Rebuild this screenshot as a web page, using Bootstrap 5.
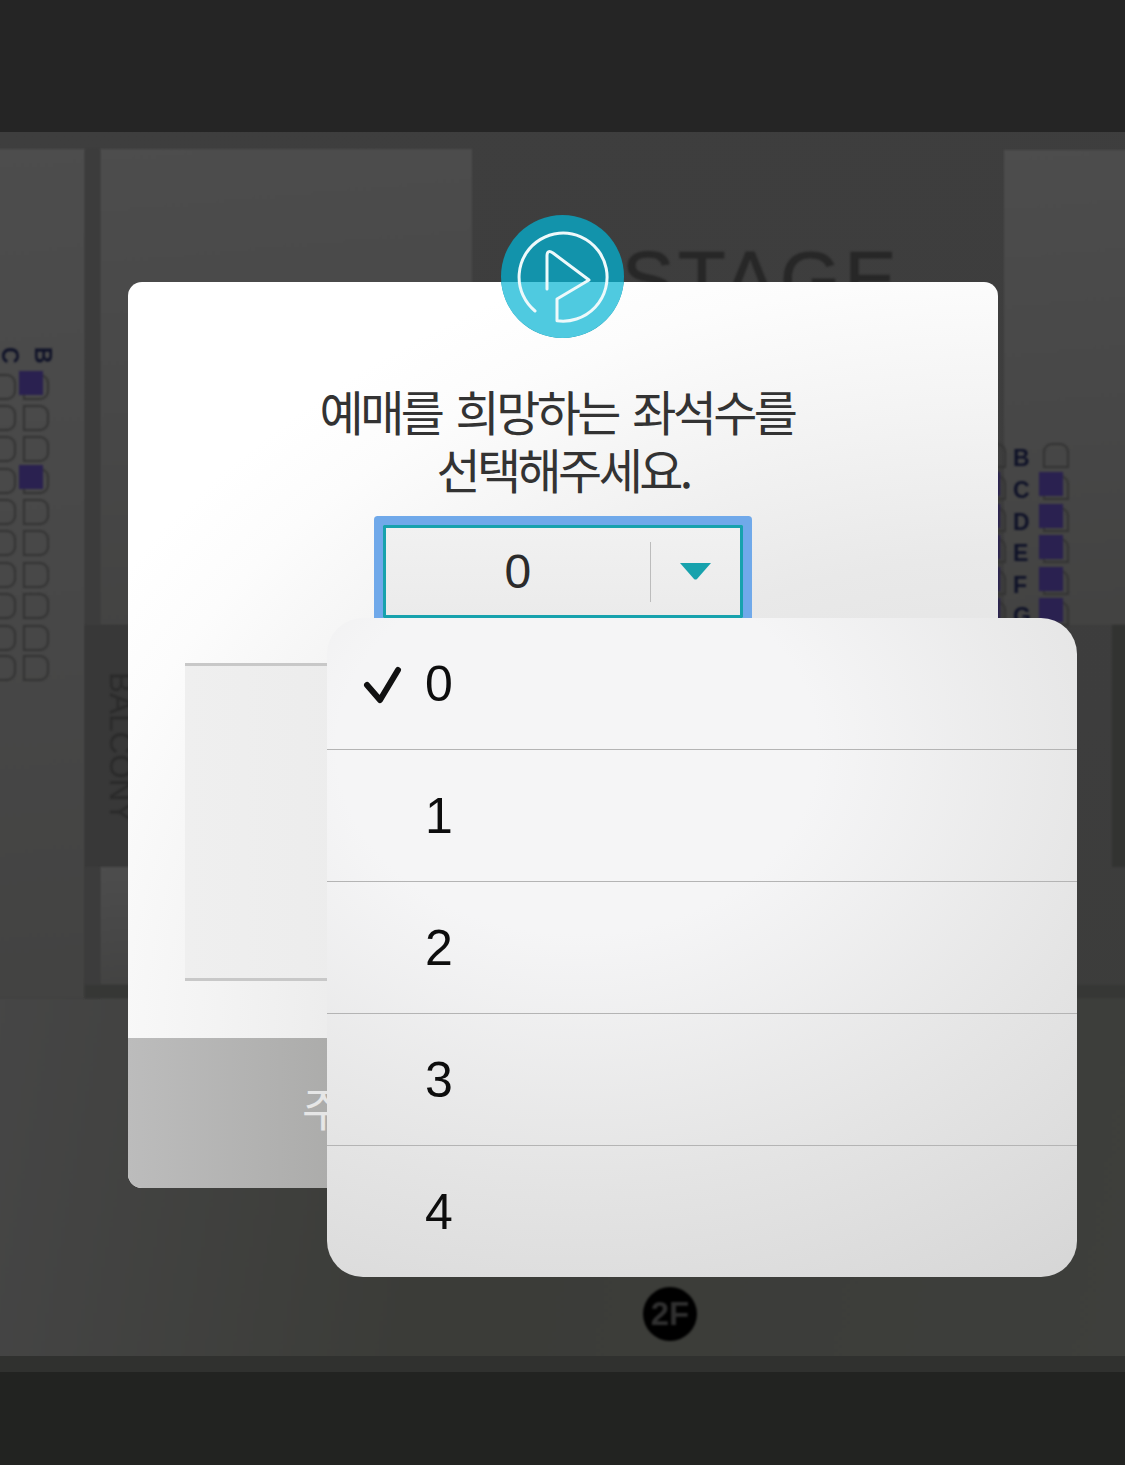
<!DOCTYPE html>
<html lang="ko">

<head>
    <meta charset="UTF-8">
    <meta name="viewport" content="width=device-width, initial-scale=1.0">
    <title>좌석 선택</title>
    <link rel="stylesheet" href="https://cdn.jsdelivr.net/npm/bootstrap@5.3.2/dist/css/bootstrap.min.css">
    <style>
        html, body {
            margin: 0;
            background-color: #252525;
        }

        .screen {
            position: relative;
            width: 1125px;
            height: 1465px;
            overflow: hidden;
            font-family: "Liberation Sans", "Noto Sans CJK KR", sans-serif;
        }

        .top-bar {
            height: 132px;
            background-color: #252525;
        }

        .bottom-bar {
            height: 93px;
            background-color: #222321;
        }

        .seat-map {
            position: relative;
            height: 1240px;
            overflow: hidden;
            background: linear-gradient(170deg, #3e3e3e 0%, #3d3d3d 55%, #3b3c39 100%);
            border-bottom: 16px solid #30312f;
        }

        .seat-map > * {
            filter: blur(.9px);
        }

        .map-floor {
            position: absolute;
            left: -4px;
            right: -4px;
            top: 866px;
            bottom: -4px;
            background: linear-gradient(100deg, #464646 0%, #3b3c38 40%, #3e3f3c 100%);
        }

        .map-panel {
            position: absolute;
            background: linear-gradient(175deg, #4d4d4d 0%, #474747 60%, #434342 100%);
        }

        .map-strip {
            position: absolute;
            background-color: #3c3c3c;
        }

        .stage-text {
            position: absolute;
            left: 622px;
            top: 108px;
            font-size: 78px;
            line-height: 1;
            letter-spacing: 4px;
            color: #272727;
            -webkit-text-stroke: .8px #272727;
        }

        .balcony-text {
            position: absolute;
            left: 104px;
            top: 540px;
            writing-mode: vertical-rl;
            font-size: 31.5px;
            line-height: 1;
            color: #2a2a2a;
        }

        .seat-box {
            position: absolute;
            border: 2px solid #333;
        }

        .seat-left {
            width: 26px;
            height: 26px;
            border-radius: 0 9px 9px 0;
        }

        .seat-right {
            width: 26px;
            height: 25px;
            border-radius: 9px 9px 0 0;
        }

        .seat-taken {
            position: absolute;
            width: 24px;
            height: 24px;
            left: -6px;
            top: -5px;
            background-color: #2a2150;
        }

        .row-label {
            position: absolute;
            font-size: 23px;
            font-weight: 700;
            line-height: 1;
            color: #0f1228;
        }

        .row-label-turned {
            writing-mode: vertical-rl;
        }

        .floor-badge {
            position: absolute;
            left: 643px;
            top: 1155px;
            width: 54px;
            height: 54px;
            border-radius: 50%;
            background-color: #000;
            color: #303030;
            font-size: 33px;
            font-weight: 700;
        }

        .seat-dialog {
            position: absolute;
            left: 128px;
            top: 282px;
            width: 870px;
            height: 906px;
            border-radius: 14px;
            background: radial-gradient(1000px 800px at 870px 756px, #e0e0e0 30%, #e9e9e9 60%, #f3f3f3 78%, #fcfcfc 95%, #fff 105%);
        }

        .brand-mark {
            position: absolute;
            left: 373px;
            top: -67px;
            width: 123px;
            height: 123px;
        }

        .dialog-title {
            margin: 99px 0 28px;
            font-family: "Noto Sans CJK KR", "Liberation Sans", sans-serif;
            font-size: 48px;
            font-weight: 400;
            line-height: 58px;
            letter-spacing: -3.6px;
            text-align: center;
            color: #333;
        }

        .title-first {
            display: inline-block;
            margin-right: 12px;
            word-spacing: 4.5px;
        }

        .count-select {
            width: 360px;
            height: 93px;
            margin: 0 auto 45px;
            border: 3px solid #17a2ad;
            box-shadow: 0 0 0 9px #70a9ea;
            border-radius: 1px;
            background: linear-gradient(#f1f1f1, #ebebeb);
            font-size: 48px;
            color: #2b2b2b;
        }

        .count-rule {
            width: 1.5px;
            height: 60px;
            background-color: #bcbcbc;
        }

        .count-arrow {
            width: 89px;
        }

        .seat-note {
            height: 318px;
            margin: 0 57px 57px;
            border-top: 3px solid #c8c8c8;
            border-bottom: 3px solid #c8c8c8;
            background: linear-gradient(90deg, #efefef, #e2e2e2);
        }

        .dialog-foot {
            height: 150px;
            padding: 0 0 14px 174px;
            border-radius: 0 0 14px 14px;
            background: linear-gradient(90deg, #bcbcbc, #a4a4a2 35%);
            font-family: "Noto Sans CJK KR", "Liberation Sans", sans-serif;
            font-size: 46px;
            color: #e6e6e6;
        }

        .count-menu {
            position: absolute;
            left: 327px;
            top: 618px;
            width: 750px;
            height: 659px;
            overflow: hidden;
            border-radius: 36px;
            background: radial-gradient(800px 620px at 250px 130px, #f5f5f6 30%, #e4e4e4 70%, #d6d6d6 105%);
        }

        .menu-row {
            position: relative;
            height: 132px;
            padding: 0 0 0 98px;
            background: none;
            border: 0;
            border-bottom: 1px solid #b4b4b4;
            border-radius: 0;
            font-size: 50px;
            line-height: 1;
            color: #0d0d0d;
        }

        .menu-row:last-child {
            height: 131px;
            border-bottom: 0;
        }

        .menu-check {
            position: absolute;
            left: 36px;
            top: 46px;
        }
    </style>
</head>

<body>
    <div class="screen">
        <div class="d-flex flex-column">
            <div class="top-bar"></div>
            <div class="seat-map" id="seatMap">
                <div class="map-floor"></div>
                <div class="map-panel" style="left:-4px;top:17px;width:89px;height:849px"></div>
                <div class="map-panel" style="left:100px;top:17px;width:372px;height:476px"></div>
                <div class="map-panel" style="left:1004px;top:18px;width:125px;height:475px"></div>
                <div class="map-strip" style="left:85px;top:17px;width:15px;height:849px"></div>
                <div class="map-strip" style="left:85px;top:493px;width:43px;height:242px;background-color:#383838"></div>
                <div class="map-panel" style="left:100px;top:735px;width:30px;height:118px"></div>
                <div class="map-strip" style="left:85px;top:735px;width:15px;height:131px"></div>
                <div class="map-strip" style="left:85px;top:853px;width:1044px;height:13px;background-color:#363735"></div>
                <div class="map-strip" style="left:1112px;top:493px;width:17px;height:242px;background-color:#323331"></div>
                <div class="stage-text">STAGE</div>
                <div class="balcony-text">BALCONY</div>
                <div class="floor-badge d-flex align-items-center justify-content-center">2F</div>
            </div>
            <div class="bottom-bar"></div>
        </div>

        <div class="seat-dialog d-flex flex-column">
            <svg class="brand-mark" viewBox="0 0 123 123" fill="none">
                <circle cx="61.5" cy="61.5" r="61.5" fill="#1293ab"/>
                <path d="M.25 67H122.750A61.500 61.500 0 0 1 .25 67Z" fill="#4fcae0"/>
                <path d="M34 96A44 44 0 1 1 56 105.700V84L88 65L52 38Q46 34 46 41V74" stroke="#eef9fb" stroke-width="3" stroke-linecap="round" stroke-linejoin="round"/>
            </svg>
            <h1 class="dialog-title"><span class="title-first">예매를 희망하는 좌석수를</span><br>선택해주세요.</h1>
            <div class="count-select d-flex align-items-center">
                <div class="flex-grow-1 text-center">0</div>
                <div class="count-rule"></div>
                <div class="count-arrow d-flex justify-content-center">
                    <svg width="31" height="17" viewBox="0 0 31 17"><path d="M0 0H31L17 16Q15.500 17 14 16Z" fill="#17a2ad"/></svg>
                </div>
            </div>
            <div class="seat-note"></div>
            <div class="dialog-foot d-flex align-items-center">주</div>
        </div>

        <div class="count-menu list-group">
            <div class="menu-row list-group-item d-flex align-items-center">
                <svg class="menu-check" width="40" height="40" viewBox="0 0 40 40" fill="none"><path d="M4 21L17 36L35 6" stroke="#111" stroke-width="6" stroke-linecap="round" stroke-linejoin="round"/></svg>
                0
            </div>
            <div class="menu-row list-group-item d-flex align-items-center">1</div>
            <div class="menu-row list-group-item d-flex align-items-center">2</div>
            <div class="menu-row list-group-item d-flex align-items-center">3</div>
            <div class="menu-row list-group-item d-flex align-items-center">4</div>
        </div>
    </div>
    <script>
        const seatMap = document.getElementById('seatMap');
        const mapTop = 132;

        function addSeat(type, x, y, taken) {
            const seat = document.createElement('div');
            seat.className = 'seat-box ' + type;
            seat.style.left = x + 'px';
            seat.style.top = (y - mapTop) + 'px';
            if (taken) {
                const mark = document.createElement('div');
                mark.className = 'seat-taken';
                seat.appendChild(mark);
            }
            seatMap.appendChild(seat);
        }

        function addLabel(text, x, y, turned) {
            const label = document.createElement('div');
            label.className = 'row-label' + (turned ? ' row-label-turned' : '');
            label.textContent = text;
            label.style.left = x + 'px';
            label.style.top = (y - mapTop) + 'px';
            seatMap.appendChild(label);
        }

        // left block, seats face right
        [374, 405, 436, 468, 499, 530, 562, 593, 625, 655].forEach(function (y, i) {
            addSeat('seat-left', -10, y, false);
            addSeat('seat-left', 23, y, i === 0 || i === 3);
        });
        addLabel('B', 31, 347, true);
        addLabel('C', -2, 347, true);

        // right block, seats face up
        [443, 475, 507, 538, 570, 601].forEach(function (y, i) {
            addSeat('seat-right', 980, y, i > 0);
            addSeat('seat-right', 1043, y, i > 0);
            addLabel('BCDEFG'[i], 1013, y + 4, false);
        });
    </script>
</body>

</html>
